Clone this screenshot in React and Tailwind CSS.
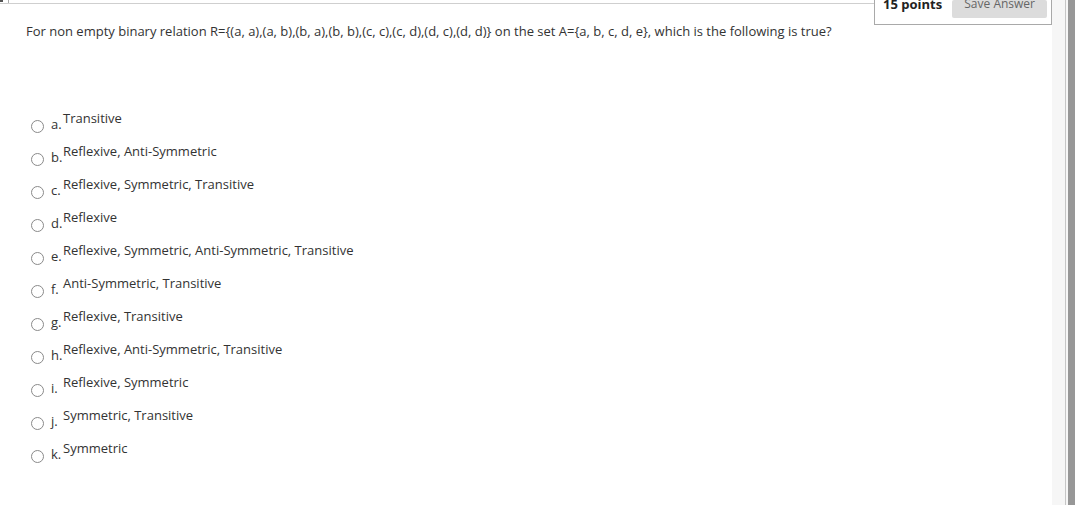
const OPTIONS = [
  ['a.', 'Transitive'],
  ['b.', 'Reflexive, Anti-Symmetric'],
  ['c.', 'Reflexive, Symmetric, Transitive'],
  ['d.', 'Reflexive'],
  ['e.', 'Reflexive, Symmetric, Anti-Symmetric, Transitive'],
  ['f.', 'Anti-Symmetric, Transitive'],
  ['g.', 'Reflexive, Transitive'],
  ['h.', 'Reflexive, Anti-Symmetric, Transitive'],
  ['i.', 'Reflexive, Symmetric'],
  ['j.', 'Symmetric, Transitive'],
  ['k.', 'Symmetric'],
];

function Option({ letter, label }) {
  return (
    <label className="flex items-start h-[33px]">
      <span className="mt-[11px] w-[13px] h-[13px] rounded-full border border-[#8a8a8a] bg-white shrink-0" />
      <span className="mt-[6px] ml-[7px] w-[12px] shrink-0 text-[13px] leading-[18px] text-[#333]">{letter}</span>
      <span className="text-[13px] leading-[18px] text-[#333]">{label}</span>
    </label>
  );
}

export default function App() {
  return (
    <div className="flex w-[1075px] h-[505px] bg-white overflow-hidden" style={{ fontFamily: '"Open Sans", "Liberation Sans", sans-serif' }}>
      <div className="relative flex-1 flex flex-col">
        {/* top rule + points box */}
        <div className="h-[4px] border-b border-[#cfcfcf] mr-[176px] relative">
          <span className="absolute left-0 top-0 w-[3px] h-[2px] bg-[#555]" />
          <span className="absolute left-[8px] top-0 w-px h-[3px] bg-[#aaa]" />
        </div>
        <div className="absolute right-0 top-0 w-[178px] h-[25px] border-l border-r border-b border-[#a9a9a9] bg-white flex items-start">
          <span className="ml-[8px] -mt-[5px] text-[13px] font-bold leading-[18px] text-[#222]">15 points</span>
          <button className="ml-[10px] w-[95px] h-[18px] bg-[#dcdcdc] rounded-[2px] flex justify-center">
            <span className="-mt-[5px] text-[12px] leading-[18px] text-[#666]">Save Answer</span>
          </button>
        </div>

        <p className="ml-[26px] mt-[18px] text-[13px] leading-[18px] text-[#333]">
          For non empty binary relation R={'{'}(a, a),(a, b),(b, a),(b, b),(c, c),(c, d),(d, c),(d, d){'}'} on the set A={'{'}a, b, c, d, e{'}'}, which is the following is true?
        </p>

        <div className="ml-[31px] mt-[69px] flex flex-col">
          {OPTIONS.map(([l, t]) => (
            <Option key={l} letter={l} label={t} />
          ))}
        </div>
      </div>

      {/* right edge / scrollbar */}
      <div className="flex h-full">
        <div className="w-[13px] bg-[#f6f6f6]" />
        <div className="w-px bg-[#c6c6c6]" />
        <div className="w-[2px] bg-[#f6f6f6]" />
        <div className="w-[7px] bg-[#979797]" />
      </div>
    </div>
  );
}
